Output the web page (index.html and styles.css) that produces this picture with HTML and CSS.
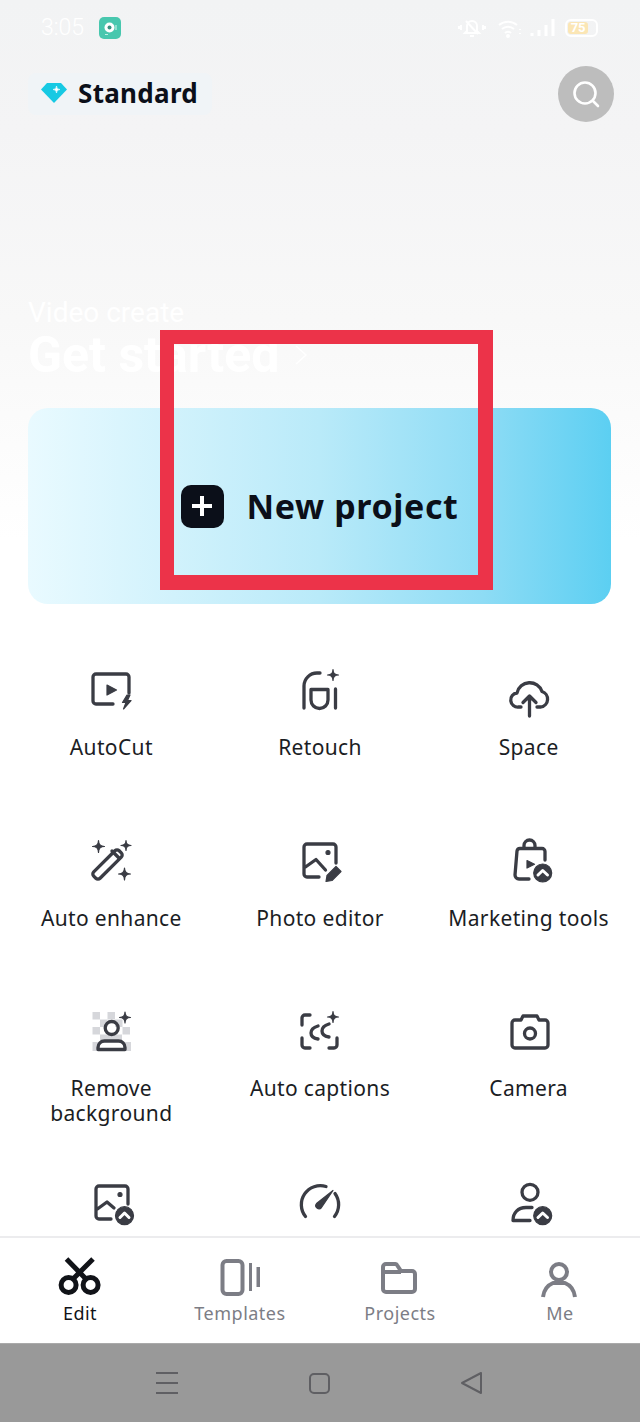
FILE: index.html
```html
<!DOCTYPE html>
<html lang="en">
<head>
<meta charset="utf-8">
<title>CapCut</title>
<link rel="stylesheet" href="styles.css">
</head>
<body>
<div class="app">
  <div class="status">
    <div class="status-left">
      <span class="time">3:05</span>
      <svg class="app-badge" width="22" height="22" viewBox="0 0 22 22"><rect width="22" height="22" rx="5" fill="#48c7ae"/><circle cx="10.500" cy="10.500" r="5" fill="#fff"/><circle cx="10.500" cy="10.500" r="2" fill="#3a8f80"/><path d="M6 17.500h3M17 8v5" stroke="#bfeee3" stroke-width="1.200"/></svg>
    </div>
    <div class="status-right">
      <svg class="st bell" width="28" height="20" viewBox="0 0 28 20"><path d="M14 3a5 5 0 0 1 5 5v5l2 2H7l2-2V8a5 5 0 0 1 5-5zM12 18h4M8 3l12 13M3 7v5M1 8v3M25 7v5M27 8v3"/></svg>
      <svg class="st" width="24" height="20" viewBox="0 0 24 20"><path d="M1 7a14 14 0 0 1 18 0M4 11a9 9 0 0 1 12 0M7 15a4 4 0 0 1 6 0M22 11v1M22 15v1"/><circle cx="10" cy="18" r="1"/></svg>
      <svg class="st sig" width="25" height="20" viewBox="0 0 25 20"><path d="M2 15v3M9 12v6M16 7v11M23 1v17"/></svg>
      <div class="battery"><span class="battery-level">75</span></div>
    </div>
  </div>

  <div class="top">
    <div class="plan">
      <svg width="26" height="20" viewBox="0 0 26 20"><path d="M6 0h14l6 6.500L13 20 0 6.500z" fill="#17c9e3"/><path d="M15.500 3q0 3.500 3.500 3.500-3.500 0-3.500 3.500 0-3.500-3.500-3.500 3.500 0 3.500-3.500z" fill="#fff" stroke="#fff" stroke-width=".6"/></svg>
      <span class="plan-name">Standard</span>
    </div>
    <div class="search">
      <svg width="32" height="32" viewBox="0 0 32 32" fill="none" stroke="#fff" stroke-width="2.600" stroke-linecap="round"><circle cx="15" cy="15" r="10.500"/><path d="M23 23l5 5"/></svg>
    </div>
  </div>

  <div class="hero">
    <div class="hero-sub">Video create</div>
    <div class="hero-title">Get started
      <svg width="16" height="24" viewBox="0 0 16 24" fill="none" stroke="#fff" stroke-width="1.500"><path d="M3 3l10 9-10 9"/></svg>
    </div>
  </div>

  <div class="card">
    <span class="plus"><svg width="24" height="24" viewBox="0 0 24 24" stroke="#fff" stroke-width="4"><path d="M12 2v20M2 12h20"/></svg></span>
    <span class="card-label">New project</span>
  </div>

  <div class="tools">
    <div class="tool">
      <svg class="ic" width="48" height="52" viewBox="0 1 48 52"><path d="M26 37H9a3 3 0 0 1-3-3V10a3 3 0 0 1 3-3h30a3 3 0 0 1 3 3v16"/><path class="f" d="M20 18l9.500 5-9.500 5zM40 28l-4.500 7.500h3.500L36.500 42 44 33.500h-3.500L43 28z"/></svg>
      <span class="label">AutoCut</span>
    </div>
    <div class="tool">
      <svg class="ic" width="48" height="52" viewBox="0 1 48 52"><path d="M8 41V19a13 13 0 0 1 13-13h3M39.500 22v19M15 22.500h17V33a8.500 8.500 0 0 1-17 0z"/><path class="f" d="M37 2.500q0 5.500 5.500 5.500-5.500 0-5.500 5.500 0-5.500-5.500-5.500 5.500 0 5.500-5.500z"/></svg>
      <span class="label">Retouch</span>
    </div>
    <div class="tool">
      <svg class="ic" width="48" height="52" viewBox="0 1 48 52"><path d="M16 40h-2.500A7 7 0 0 1 12 26a13 13 0 0 1 25-1.500A8 8 0 0 1 36 40h-4M24.500 49V30M18 35.500l6.500-6.500 6.500 6.500"/></svg>
      <span class="label">Space</span>
    </div>

    <div class="tool">
      <svg class="ic" width="48" height="52" viewBox="0 7 48 52"><rect x="2.500" y="28" width="36" height="9" rx="3" transform="rotate(-45 20.500 32.500)"/><path d="M25 19l7 7"/><path class="f" d="M11.500 8.500q0 6 6 6-6 0-6 6 0-6-6-6 6 0 6-6zM39 8.500q0 5 5 5-5 0-5 5 0-5-5-5 5 0 5-5zM37.500 36q0 6 6 6-6 0-6 6 0-6-6-6 6 0 6-6z"/></svg>
      <span class="label">Auto enhance</span>
    </div>
    <div class="tool">
      <svg class="ic" width="48" height="52" viewBox="0 7 48 52"><path d="M23 45H11a3 3 0 0 1-3-3V15a3 3 0 0 1 3-3h26a3 3 0 0 1 3 3v16M8 36l12-8.500L29.500 38"/><circle class="f" cx="32" cy="20.500" r="2"/><path class="f" d="M30 49.500l1-6 9-9 5 5-9 9z"/></svg>
      <span class="label">Photo editor</span>
    </div>
    <div class="tool">
      <svg class="ic" width="48" height="52" viewBox="0 7 48 52"><path d="M24 47H14a4 4 0 0 1-4-4l2-24a3 3 0 0 1 3-2.500h22a3 3 0 0 1 3 3V28M19 16v-2.500a5.500 5.500 0 0 1 11 0V16"/><path class="f" d="M22 28.500l7.500 3.800-7.500 3.700z"/><circle class="f" cx="37.700" cy="41" r="9"/><path class="chev" d="M33 43l4.700-4.500 4.800 4.500"/></svg>
      <span class="label">Marketing tools</span>
    </div>

    <div class="tool">
      <svg class="ic" width="48" height="52" viewBox="0 0 48 52"><path class="chk" d="M5.500 3h7.500v7.500H5.500zM20.500 3H28v7.500h-7.500zM13 10.500h7.500V18H13zM28 10.500h7.500V18H28zM5.500 18H13v7.500H5.500zM35.500 18H43v7.500h-7.500zM13 25.500h22V33H13zM5.500 33H13v9H5.500zM36 33h8v9h-8z"/><circle cx="24.700" cy="19" r="6.500"/><path d="M11 40.500v-2a6.500 6.500 0 0 1 6.500-6.500h14a6.500 6.500 0 0 1 6.500 6.500v2z"/><path class="f" d="M38 3q0 5.500 5.500 5.500-5.500 0-5.500 5.500 0-5.500-5.500-5.500 5.500 0 5.500-5.500z"/></svg>
      <span class="label">Remove<br>background</span>
    </div>
    <div class="tool">
      <svg class="ic" width="48" height="52" viewBox="0 0 48 52"><path d="M14 6H9a3 3 0 0 0-3 3v7M6 29v7a3 3 0 0 0 3 3h5M33 39h5a3 3 0 0 0 3-3v-7M22 17q-7 2-7 7t7 6M33 15q-7 2-7 7t7 6"/><path class="f" d="M37 2.500q0 5.500 5.500 5.500-5.500 0-5.500 5.500 0-5.500-5.500-5.500 5.500 0 5.500-5.500z"/></svg>
      <span class="label">Auto captions</span>
    </div>
    <div class="tool">
      <svg class="ic" width="48" height="52" viewBox="0 0 48 52"><path d="M10 11h6l2-4h14l2 4h6a3 3 0 0 1 3 3v22a3 3 0 0 1-3 3H10a3 3 0 0 1-3-3V14a3 3 0 0 1 3-3z"/><circle cx="25" cy="24.500" r="5.500"/></svg>
      <span class="label">Camera</span>
    </div>

    <div class="tool">
      <svg class="ic" width="48" height="52" viewBox="0 6 48 52"><path d="M24 45H12a3 3 0 0 1-3-3V15a3 3 0 0 1 3-3h26a3 3 0 0 1 3 3v15M9 36l11-8 7 6"/><circle class="f" cx="33" cy="20.500" r="2"/><circle class="f" cx="37.500" cy="41.700" r="9"/><path class="chev" d="M33 43.500l4.500-4.500 4.500 4.500"/></svg>
    </div>
    <div class="tool">
      <svg class="ic" width="48" height="52" viewBox="0 6 48 52"><path d="M9.500 42.500A19 19 0 0 1 30 12.500M38.500 42.500a19 19 0 0 0 .5-23"/><path class="f" d="M37 16.500L25.500 33.500a3 3 0 0 1-5-4z"/></svg>
    </div>
    <div class="tool">
      <svg class="ic" width="48" height="52" viewBox="0 6 48 52"><circle cx="25" cy="18.300" r="8"/><path d="M27 33.500h-6C13 33.500 8 39 8 46.500h17"/><circle class="f" cx="37.700" cy="41.700" r="9"/><path class="chev" d="M33 43.500l4.700-4.500 4.800 4.500"/></svg>
    </div>
  </div>

  <nav class="tabs">
    <div class="tab active">
      <svg class="ti" width="48" height="44" viewBox="0 0 48 44"><path d="M10.500 3L30 23M37 3L17 23"/><circle cx="12.600" cy="29" r="7.500"/><circle cx="34.600" cy="29" r="7.500"/></svg>
      <span>Edit</span>
    </div>
    <div class="tab">
      <svg class="ti" width="48" height="44" viewBox="0 0 48 44"><rect x="6.500" y="5" width="20" height="33" rx="4"/><path class="tf" d="M33 7h3v28h-3zM40.500 11H44v20h-3.500z"/></svg>
      <span>Templates</span>
    </div>
    <div class="tab">
      <svg class="ti" width="48" height="44" viewBox="0 0 48 44"><path d="M10 8h9a2 2 0 0 1 2 1l4 6h11a3 3 0 0 1 3 3v15a3 3 0 0 1-3 3H10a3 3 0 0 1-3-3V11a3 3 0 0 1 3-3zM7 16h18"/></svg>
      <span>Projects</span>
    </div>
    <div class="tab">
      <svg class="ti" width="48" height="44" viewBox="0 0 48 44"><circle cx="23" cy="16" r="8"/><path d="M7 41c1-8 5-12 10-14h12c5 2 9 6 10 14"/></svg>
      <span>Me</span>
    </div>
  </nav>

  <div class="sysnav">
    <svg class="sn" width="22" height="24" viewBox="0 0 22 24"><path d="M0 2h22M0 12h22M0 22h22"/></svg>
    <svg class="sn" width="21" height="21" viewBox="0 0 21 21"><rect x="1" y="1" width="19" height="19" rx="4"/></svg>
    <svg class="sn" width="21" height="22" viewBox="0 0 21 22"><path d="M20 1v20L1 11z"/></svg>
  </div>

  <div class="highlight"></div>
</div>
</body>
</html>
```

FILE: styles.css
```css
* { box-sizing: border-box; }
html, body { margin: 0; padding: 0; }
body { width: 640px; height: 1422px; overflow: hidden; font-family: "Noto Sans", "Liberation Sans", sans-serif; }

.app {
  position: relative;
  width: 640px;
  height: 1422px;
  display: flex;
  flex-direction: column;
  overflow: hidden;
  background: linear-gradient(#f2f3f4 0, #f4f4f5 130px, #f8f8f8 320px, #ffffff 540px);
}

.status { height: 65px; flex: none; padding: 17px 42px 0 41px; display: flex; justify-content: space-between; align-items: flex-start; }
.status-left { display: flex; align-items: center; gap: 14px; height: 22px; }
.time { font: 300 23px/22px Roboto, sans-serif; color: #fff; min-width: 44px; }
.app-badge { display: block; }
.status-right { display: flex; align-items: center; gap: 8px; height: 22px; }
.st { fill: none; stroke: #fff; stroke-width: 2; display: block; }
.bell { margin-right: 4px; }
.sig { stroke-width: 3; }
.battery { width: 33px; height: 18px; margin-left: 2px; border: 2px solid #fff; border-radius: 6px; padding: 1px; display: flex; }
.battery-level { flex: 0 0 75%; background: #fbe6b5; border-radius: 3px; color: #fff; font: 700 13px/12px Roboto, sans-serif; text-align: center; }

.top { height: 57px; flex: none; padding: 0 26px 0 28px; display: flex; justify-content: space-between; align-items: center; }
.plan { width: 184px; height: 42px; padding: 0 0 1px 13px; display: flex; align-items: center; gap: 11px; background: #f0f4f7; border-radius: 8px; }
.plan svg { display: block; }
.plan-name { font-size: 26px; font-weight: 700; color: #0b0f19; line-height: 1; letter-spacing: 0.3px; }
.search { width: 56px; height: 56px; border-radius: 50%; background: #bdbdbd; display: flex; align-items: center; justify-content: center; }

.hero { height: 286px; flex: none; padding: 177px 0 0 28px; color: #fff; }
.hero-sub { font: 400 28px/28px Roboto, sans-serif; }
.hero-title { font: 700 50px/52px Roboto, sans-serif; margin-top: 2px; display: flex; align-items: center; gap: 14px; }

.card {
  flex: none;
  width: 583px;
  height: 196px;
  margin-left: 28px;
  border-radius: 20px;
  background: linear-gradient(90deg, #e9faff 0, #b9eaf9 50%, #8edcf5 78%, #5ccff2 100%);
  display: flex;
  align-items: center;
  justify-content: center;
  gap: 23px;
}
.plus { width: 43px; height: 43px; border-radius: 10px; background: #0b0f19; display: flex; align-items: center; justify-content: center; }
.plus svg { display: block; }
.card-label { font-size: 34px; font-weight: 700; color: #0b0f19; letter-spacing: 0.6px; line-height: 1; }

.tools {
  flex: 1;
  min-height: 0;
  margin-top: 64px;
  padding: 0 7px;
  display: grid;
  grid-template-columns: repeat(3, 1fr);
  grid-auto-rows: 170.67px;
  overflow: hidden;
}
.tool { display: flex; flex-direction: column; align-items: center; }
.label { margin-top: 15px; font-size: 21px; line-height: 24.500px; letter-spacing: 0.35px; color: #1b1d24; text-align: center; white-space: nowrap; }

.ic { display: block; overflow: visible; fill: none; stroke: #3a3c44; stroke-width: 3.300; stroke-linecap: round; stroke-linejoin: round; }
.ic .f { fill: #3a3c44; stroke: #3a3c44; stroke-width: 1.200; }
.ic .chev { stroke: #fff; stroke-width: 3; }
.ic .chk { fill: #d6d7db; stroke: none; }

.tabs { flex: none; height: 107px; background: #fff; border-top: 2px solid #ececee; display: grid; grid-template-columns: repeat(4, 160px); }
.tab { display: flex; flex-direction: column; align-items: center; padding-top: 18px; color: #7c7d85; font-size: 18px; line-height: 24px; letter-spacing: 0.5px; }
.tab span { margin-top: 1px; }
.tab.active { color: #111318; }
.ti { display: block; fill: none; stroke: #7c7d85; stroke-width: 4; stroke-linejoin: round; }
.ti .tf { fill: #7c7d85; stroke: none; }
.tab.active .ti { stroke: #111318; stroke-width: 5; }

.sysnav { flex: none; height: 79px; padding-right: 2px; background: #999; border-top: 1px solid #aaa; display: flex; align-items: center; justify-content: center; gap: 131px; }
.sn { display: block; fill: none; stroke: #5f5f63; stroke-width: 2; stroke-linejoin: round; }

.highlight { position: absolute; left: 160px; top: 330px; width: 333px; height: 260px; border: solid #ec3349; border-width: 14px 15px 15px 14px; pointer-events: none; }
```
